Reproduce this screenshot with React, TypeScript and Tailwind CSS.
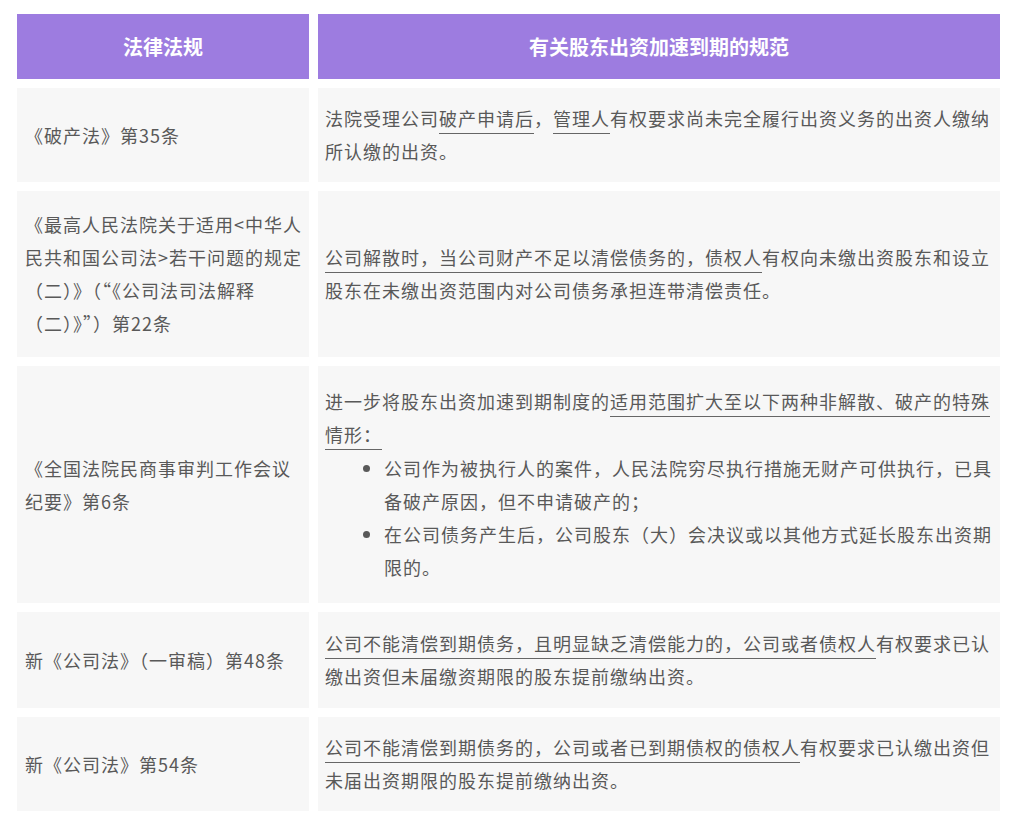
import React from "react";

const U = ({ children }: { children: React.ReactNode }) => (
  <span className="underline decoration-[#666] decoration-1 underline-offset-[7px]">{children}</span>
);

const rows: { h: string; left: React.ReactNode; right: React.ReactNode }[] = [
  {
    h: "h-[94px]",
    left: "《破产法》第35条",
    right: (
      <>法院受理公司<U>破产申请后</U>，<U>管理人</U>有权要求尚未完全履行出资义务的出资人缴纳所认缴的出资。</>
    ),
  },
  {
    h: "h-[166px]",
    left: "《最高人民法院关于适用<中华人民共和国公司法>若干问题的规定（二）》（“《公司法司法解释（二）》”）第22条",
    right: (
      <><U>公司解散时，当公司财产不足以清偿债务的，债权人</U>有权向未缴出资股东和设立股东在未缴出资范围内对公司债务承担连带清偿责任。</>
    ),
  },
  {
    h: "h-[237px]",
    left: "《全国法院民商事审判工作会议纪要》第6条",
    right: (
      <div>
        <div>进一步将股东出资加速到期制度的<U>适用范围扩大至以下两种非解散、破产的特殊情形：</U></div>
        <ul className="list-disc pl-[59px] mt-[1px]">
          <li>公司作为被执行人的案件，人民法院穷尽执行措施无财产可供执行，已具备破产原因，但不申请破产的；</li>
          <li>在公司债务产生后，公司股东（大）会决议或以其他方式延长股东出资期限的。</li>
        </ul>
      </div>
    ),
  },
  {
    h: "h-[96px]",
    left: "新《公司法》（一审稿）第48条",
    right: (
      <><U>公司不能清偿到期债务，且明显缺乏清偿能力的，公司或者债权人</U>有权要求已认缴出资但未届缴资期限的股东提前缴纳出资。</>
    ),
  },
  {
    h: "h-[94px]",
    left: "新《公司法》第54条",
    right: (
      <><U>公司不能清偿到期债务的，公司或者已到期债权的债权人</U>有权要求已认缴出资但未届出资期限的股东提前缴纳出资。</>
    ),
  },
];

export default function App() {
  return (
    <div
      className="bg-white w-[1014px] h-[836px] pt-[14px] pl-[17px] text-[#595959] text-[18px] tracking-[1px] leading-[33px]"
      style={{ fontFamily: '"Noto Sans CJK SC", "Liberation Sans", sans-serif' }}
    >
      <div className="grid grid-cols-[292px_682px] gap-x-[9px] gap-y-[9px]">
        <div className="h-[65px] bg-[#9d7ce0] text-white font-bold text-[20px] tracking-normal flex items-center justify-center">法律法规</div>
        <div className="h-[65px] bg-[#9d7ce0] text-white font-bold text-[20px] tracking-normal flex items-center justify-center">有关股东出资加速到期的规范</div>
        {rows.map((r, i) => (
          <React.Fragment key={i}>
            <div className={`${r.h} bg-[#f7f7f7] flex items-center pl-[8px] pr-[4px]`}>
              <div>{r.left}</div>
            </div>
            <div className={`${r.h} bg-[#f7f7f7] flex items-center pl-[7px] pr-[4px]`}>
              <div>{r.right}</div>
            </div>
          </React.Fragment>
        ))}
      </div>
    </div>
  );
}
